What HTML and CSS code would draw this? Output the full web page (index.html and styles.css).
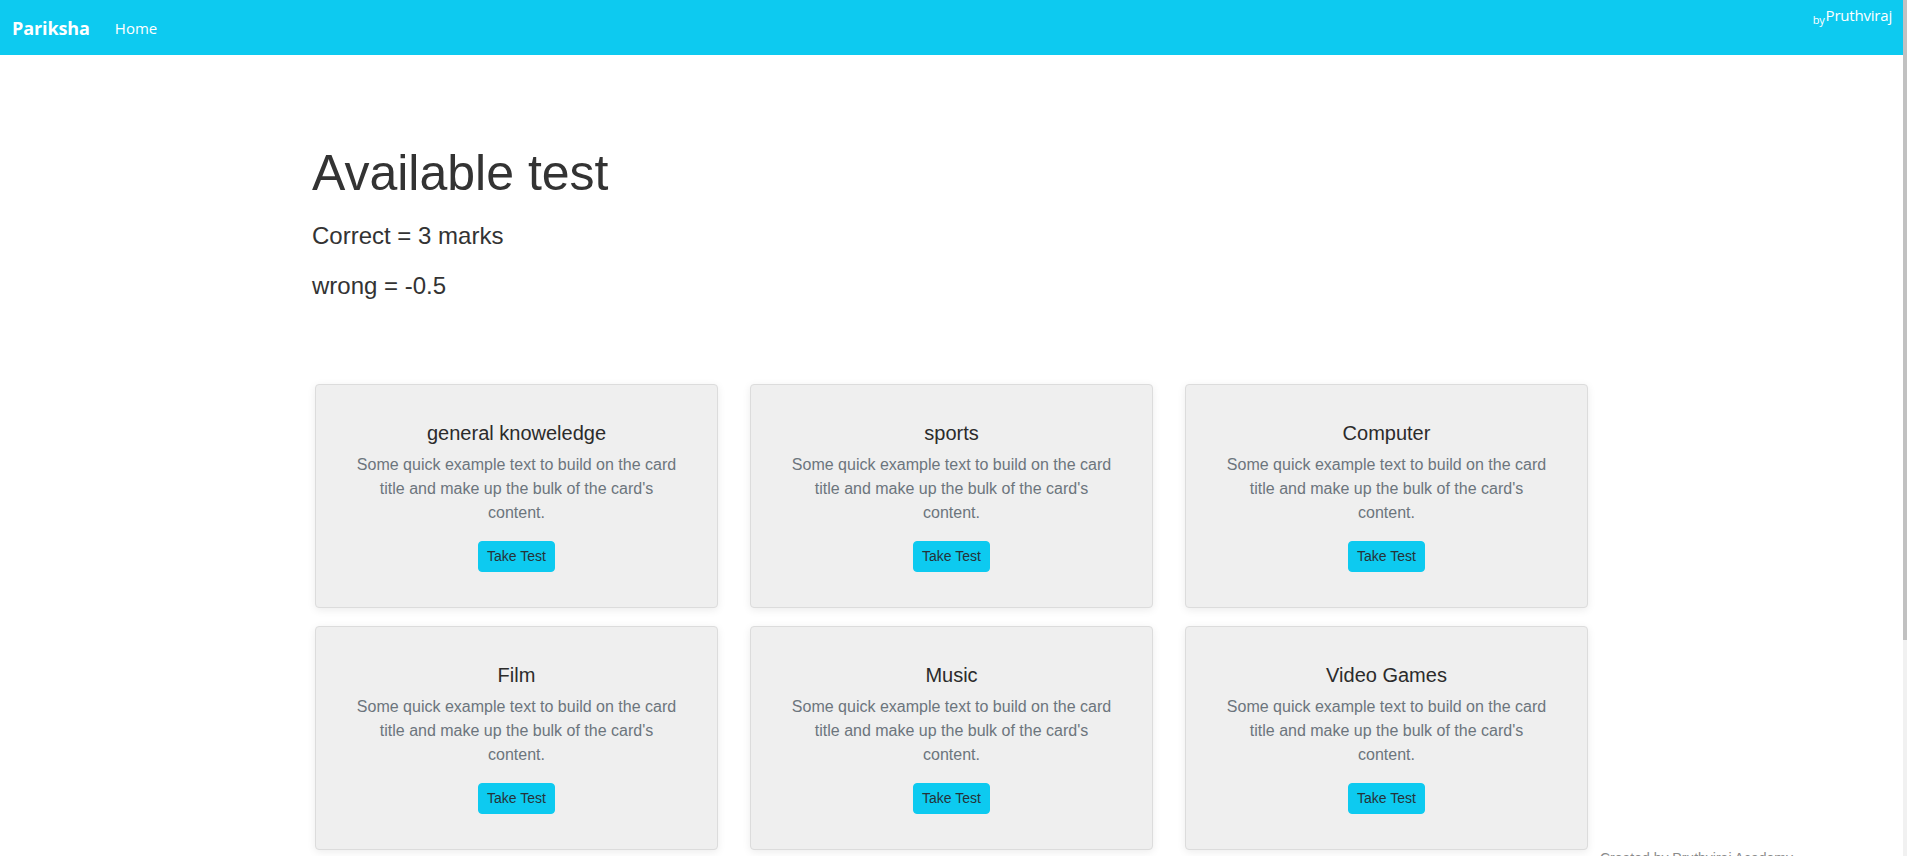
FILE: index.html
```html
<!DOCTYPE html>
<html lang="en">
<head>
<meta charset="utf-8">
<title>Pariksha</title>
<link rel="stylesheet" href="styles.css">
</head>
<body>
<nav class="navbar">
  <a class="brand" href="#">Pariksha</a>
  <a class="nav-link" href="#">Home</a>
  <span class="author"><sub>by</sub>Pruthviraj</span>
</nav>

<main class="container">
  <h1 class="title">Available test</h1>
  <p class="rule">Correct = 3 marks</p>
  <p class="rule">wrong = -0.5</p>

  <section class="cards">
    <div class="card">
      <h5 class="card-title">general knoweledge</h5>
      <p class="card-text">Some quick example text to build on the card title and make up the bulk of the card's content.</p>
      <a class="btn" href="#">Take Test</a>
    </div>
    <div class="card">
      <h5 class="card-title">sports</h5>
      <p class="card-text">Some quick example text to build on the card title and make up the bulk of the card's content.</p>
      <a class="btn" href="#">Take Test</a>
    </div>
    <div class="card">
      <h5 class="card-title">Computer</h5>
      <p class="card-text">Some quick example text to build on the card title and make up the bulk of the card's content.</p>
      <a class="btn" href="#">Take Test</a>
    </div>
    <div class="card">
      <h5 class="card-title">Film</h5>
      <p class="card-text">Some quick example text to build on the card title and make up the bulk of the card's content.</p>
      <a class="btn" href="#">Take Test</a>
    </div>
    <div class="card">
      <h5 class="card-title">Music</h5>
      <p class="card-text">Some quick example text to build on the card title and make up the bulk of the card's content.</p>
      <a class="btn" href="#">Take Test</a>
    </div>
    <div class="card">
      <h5 class="card-title">Video Games</h5>
      <p class="card-text">Some quick example text to build on the card title and make up the bulk of the card's content.</p>
      <a class="btn" href="#">Take Test</a>
    </div>
  </section>
</main>
<footer class="footer">Created by Pruthviraj Academy</footer>
<div class="scrollbar"><div class="thumb"></div></div>
</body>
</html>
```
FILE: styles.css
```css
html, body {
  overflow: hidden;
}
body {
  margin: 0;
  background: #fff;
  font-family: "Liberation Sans", Arial, sans-serif;
  color: #212529;
}
a { text-decoration: none; }

.navbar {
  display: flex;
  align-items: center;
  height: 55px;
  padding: 0 15px 0 12px;
  background: #0dcaf0;
  font-family: "Open Sans", "Noto Sans", sans-serif;
  color: #fff;
}
.brand {
  color: #fff;
  font-weight: 700;
  font-size: 18px;
  letter-spacing: -0.1px;
}
.nav-link {
  color: #fff;
  font-size: 15px;
  margin-left: 25px;
  margin-top: 1px;
}
.author {
  margin-left: auto;
  align-self: flex-start;
  padding-top: 5px;
  font-size: 15px;
  line-height: 20px;
  letter-spacing: -0.2px;
}
.author sub {
  font-size: 11px;
  vertical-align: -3px;
  margin-right: 1px;
}

.container {
  width: 1283px;
  margin: 0 auto;
  padding-top: 88px;
  box-sizing: border-box;
}
.title {
  margin: 0 0 15px;
  font-size: 50px;
  line-height: 60px;
  font-weight: 400;
  color: #333;
}
.rule {
  margin: 0 0 14px;
  font-size: 24px;
  line-height: 36px;
  color: #333;
}
.cards {
  display: grid;
  grid-template-columns: repeat(3, 403px);
  column-gap: 32px;
  row-gap: 18px;
  margin: 80px 0 0 3px;
}
.card {
  display: flex;
  flex-direction: column;
  align-items: center;
  padding: 36px 36px 35px;
  background: #efefef;
  border: 1px solid #dcdcdc;
  border-radius: 4px;
  box-shadow: 0 2px 8px rgba(0, 0, 0, 0.08);
  text-align: center;
}
.card-title {
  margin: 0 0 8px;
  font-size: 20px;
  line-height: 24px;
  font-weight: 400;
  color: #2b2b2b;
}
.card-text {
  margin: 0 0 16px;
  font-size: 16px;
  line-height: 24px;
  color: #6c757d;
}
.btn {
  display: inline-block;
  padding: 4px 8px;
  font-size: 14px;
  line-height: 21px;
  color: #263238;
  background: #0dcaf0;
  border: 1px solid #0dcaf0;
  border-radius: 4px;
}

.footer {
  margin-top: 0;
  padding-left: 1600px;
  font-size: 14px;
  line-height: 17px;
  color: #8a8a8a;
}

.scrollbar {
  position: fixed;
  top: 0;
  right: 0;
  width: 4px;
  height: 100%;
  background: #f1f1f1;
}
.thumb {
  height: 640px;
  background: #c1c1c1;
}
```
